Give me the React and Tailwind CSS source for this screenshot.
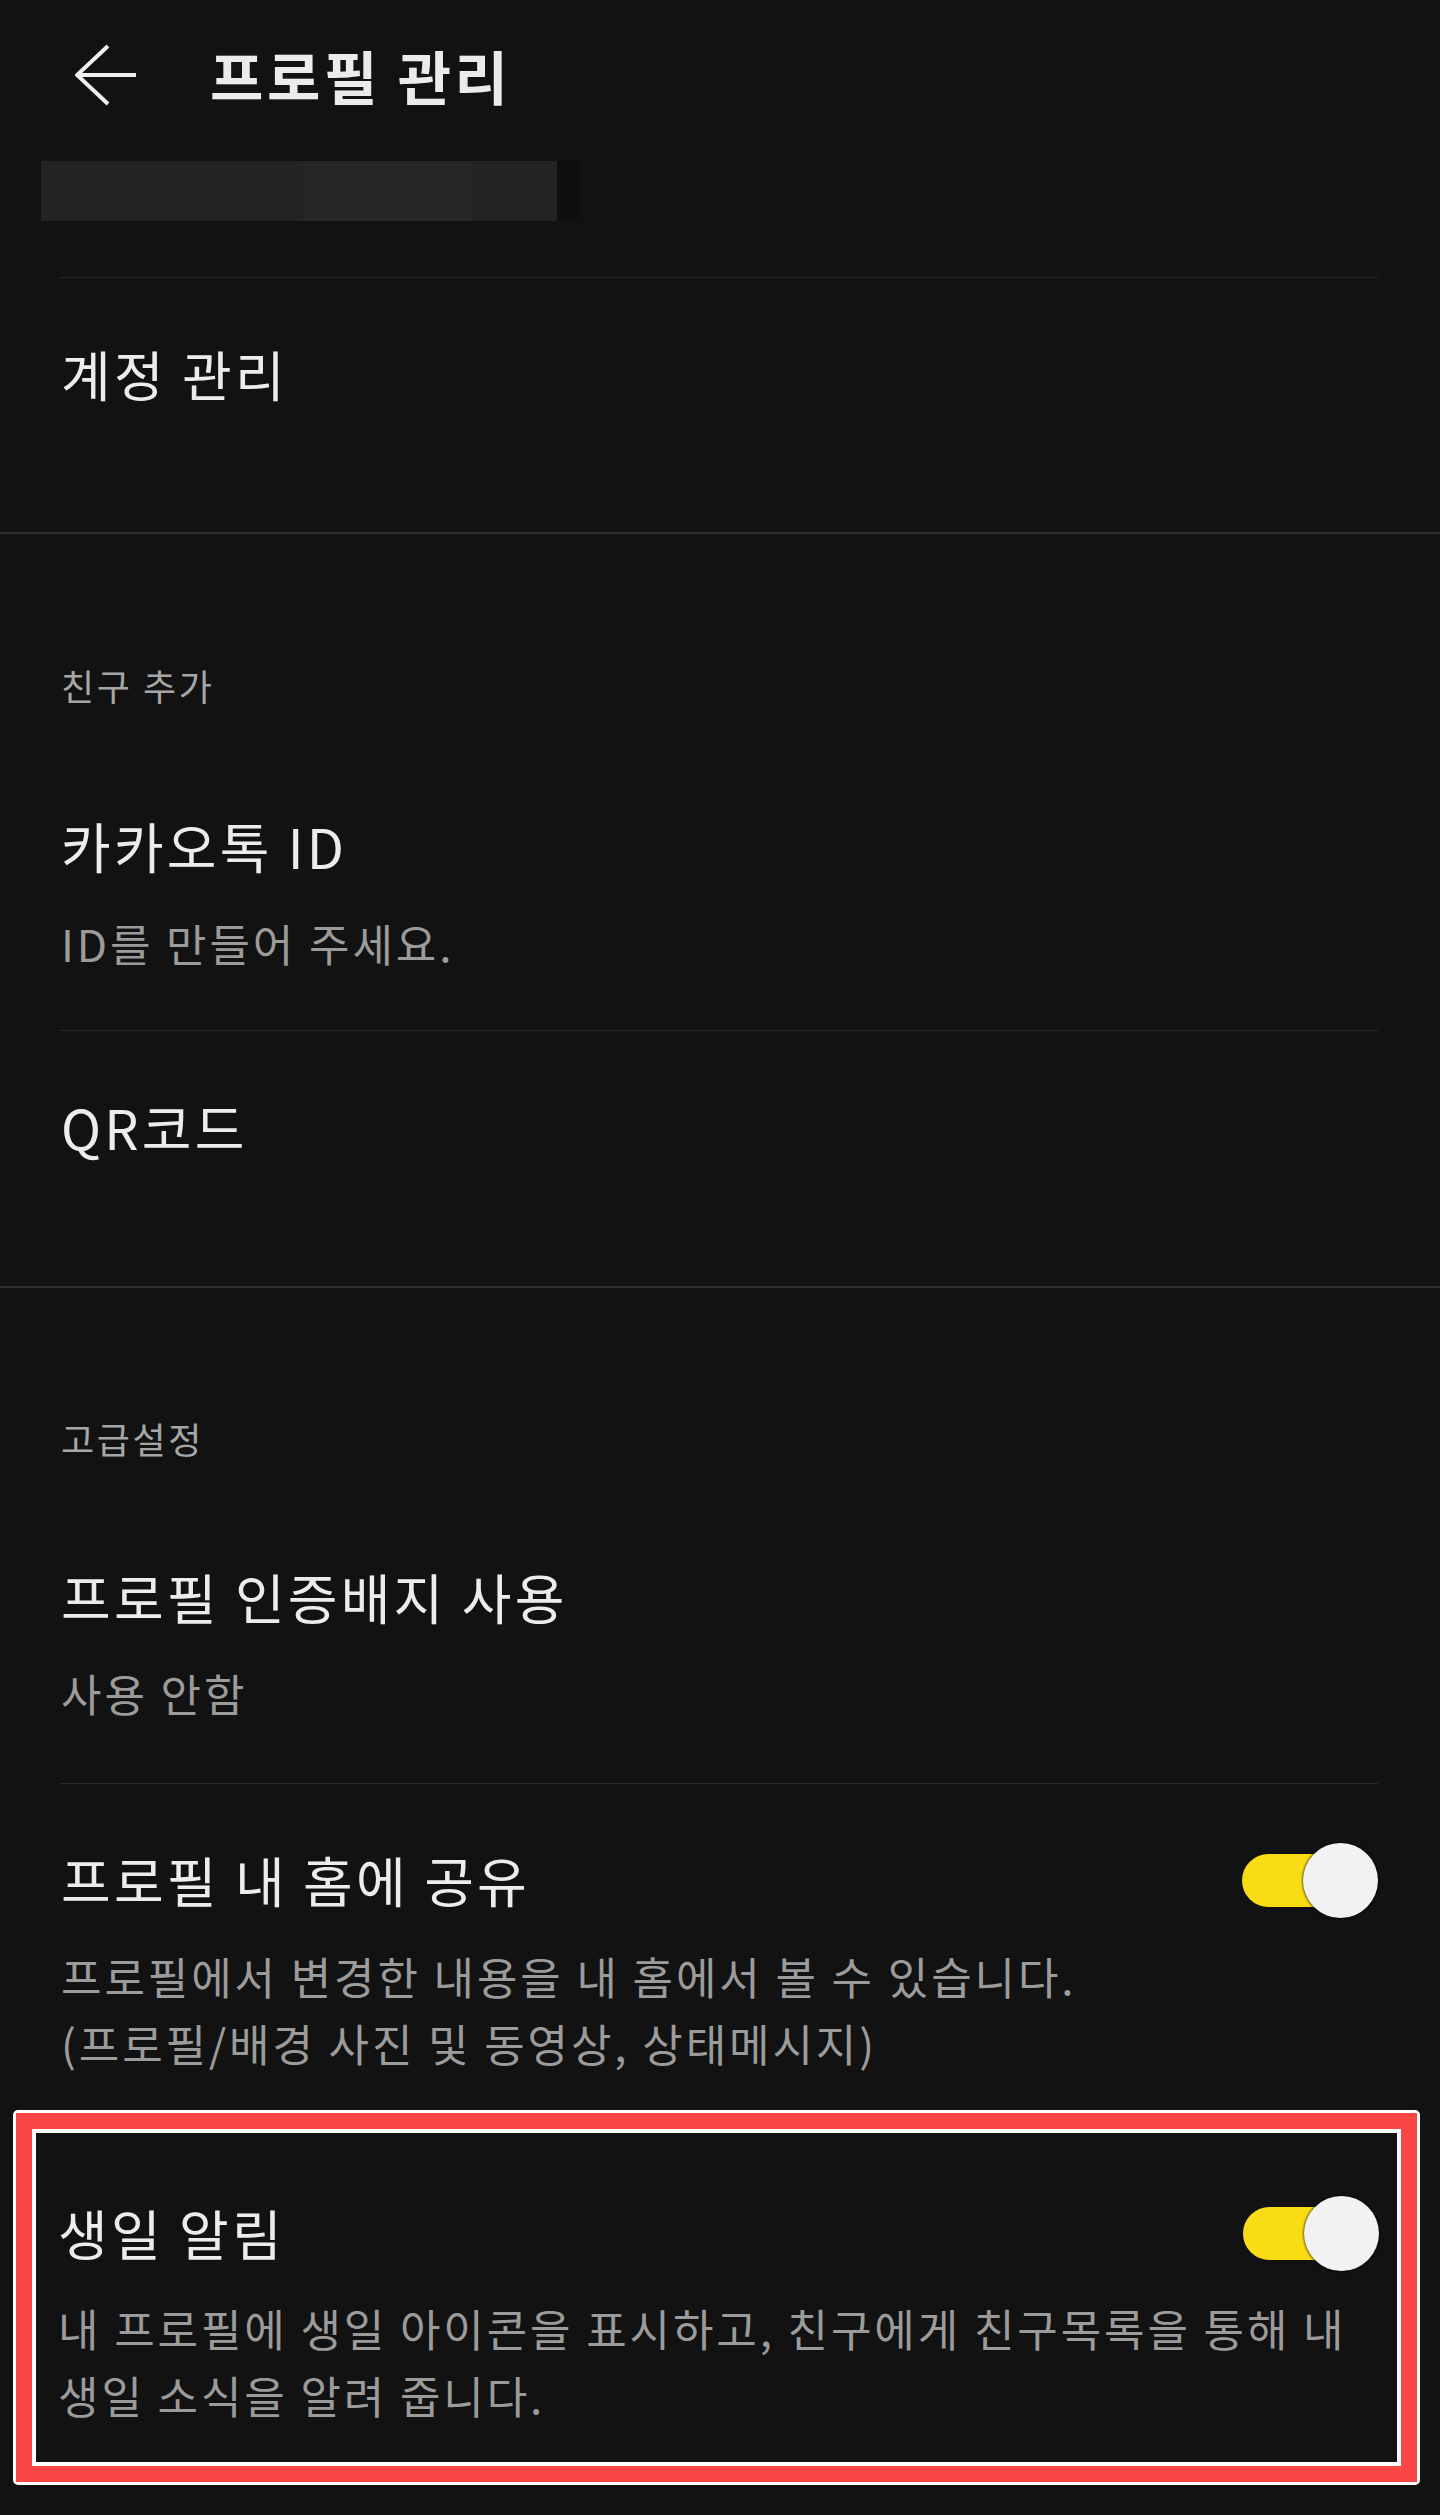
import React from 'react';

// 프로필 관리 설정 화면 (다크 모드)

function Toggle() {
    return (
        <div className="relative w-[136px] h-[75px] shrink-0">
            <div className="absolute left-0 top-[11px] w-[112px] h-[53px] rounded-full bg-[#fadc14]" />
            <div className="absolute right-0 top-0 w-[75px] h-[75px] rounded-full bg-[#f2f2f2] shadow-[0_0_2px_1px_rgba(0,0,0,0.55)]" />
        </div>
    );
}

function Title({ children }) {
    return <div className="text-[54px] leading-[64px] tracking-[3.2px] text-[#ececec] whitespace-nowrap">{children}</div>;
}

function Desc({ children, className = '' }) {
    return <div className={`text-[44px] leading-[67px] tracking-[2.9px] text-[#9b9b9b] whitespace-nowrap ${className}`}>{children}</div>;
}

function SectionLabel({ children, className = '' }) {
    return <div className={`text-[36px] leading-[44px] tracking-[2.6px] text-[#a6a6a6] ${className}`}>{children}</div>;
}

function Divider({ className = '' }) {
    return <div className={`h-px bg-[#272727] ${className}`} />;
}

function ThickDivider({ className = '' }) {
    return <div className={`h-[2px] bg-[#2e2e2e] ${className}`} />;
}

export default function App() {
    return (
        <div
            className="w-[1440px] min-h-[2515px] bg-[#121212] overflow-hidden"
            style={{ fontFamily: '"Noto Sans CJK KR", "Noto Sans", sans-serif' }}
        >
            {/* 헤더 */}
            <div className="h-[150px] flex items-center pl-[75px]">
                <svg width="62" height="62" viewBox="0 0 62 62" fill="none" stroke="#f0f0f0" strokeWidth="4">
                    <path d="M33 2 L2 31 L33 60 M2 31 H61" />
                </svg>
                <div className="ml-[73px] text-[58px] leading-[64px] font-bold tracking-[3.6px] text-[#ebebeb]">프로필 관리</div>
            </div>

            {/* 가려진 영역 */}
            <div className="mt-[11px] ml-[41px] flex h-[60px]">
                <div className="w-[257px] bg-[#232323]" />
                <div className="w-[87px] bg-[#252525]" />
                <div className="w-[87px] bg-[#262626]" />
                <div className="w-[85px] bg-[#242424]" />
                <div className="w-[21px] bg-[#0f0f0f]" />
            </div>

            {/* 계정 관리 */}
            <div className="pl-[61px] pr-[62px]">
                <Divider className="mt-[56px] -ml-[2px]" />
                <div className="mt-[64px]">
                    <Title>계정 관리</Title>
                </div>
            </div>
            <ThickDivider className="mt-[126px]" />

            {/* 친구 추가 */}
            <div className="pl-[61px] pr-[62px]">
                <SectionLabel className="mt-[129px]">친구 추가</SectionLabel>
                <div className="mt-[107px]">
                    <Title>카카오톡 ID</Title>
                </div>
                <Desc className="mt-[32px]">ID를 만들어 주세요.</Desc>
                <Divider className="mt-[53px] -ml-[2px]" />
                <div className="mt-[64px]">
                    <Title>QR코드</Title>
                </div>
            </div>
            <ThickDivider className="mt-[127px]" />

            {/* 고급설정 */}
            <div className="pl-[61px] pr-[62px]">
                <SectionLabel className="mt-[128px]">고급설정</SectionLabel>
                <div className="mt-[105px]">
                    <Title>프로필 인증배지 사용</Title>
                </div>
                <Desc className="mt-[31px]">사용 안함</Desc>
                <Divider className="mt-[56px] -ml-[2px]" />

                <div className="mt-[64px] h-[64px] flex items-center justify-between">
                    <Title>프로필 내 홈에 공유</Title>
                    <Toggle />
                </div>
                <Desc className="mt-[31px]">
                    프로필에서 변경한 내용을 내 홈에서 볼 수 있습니다.
                    <br />
                    (프로필/배경 사진 및 동영상, 상태메시지)
                </Desc>

                {/* 강조 표시된 항목 */}
                <div className="mt-[33px] -ml-[48px] -mr-[42px] border-[3px] border-white rounded-[5px]">
                    <div className="border-[16px] border-[#fb4444]">
                        <div className="border-4 border-white bg-[#121212] pl-[22px] pr-[18px] pt-[68px] pb-[33px]">
                            <div className="h-[64px] flex items-center justify-between">
                                <Title>생일 알림</Title>
                                <Toggle />
                            </div>
                            <Desc className="mt-[30px]">
                                내 프로필에 생일 아이콘을 표시하고, 친구에게 친구목록을 통해 내
                                <br />
                                생일 소식을 알려 줍니다.
                            </Desc>
                        </div>
                    </div>
                </div>
            </div>
        </div>
    );
}
